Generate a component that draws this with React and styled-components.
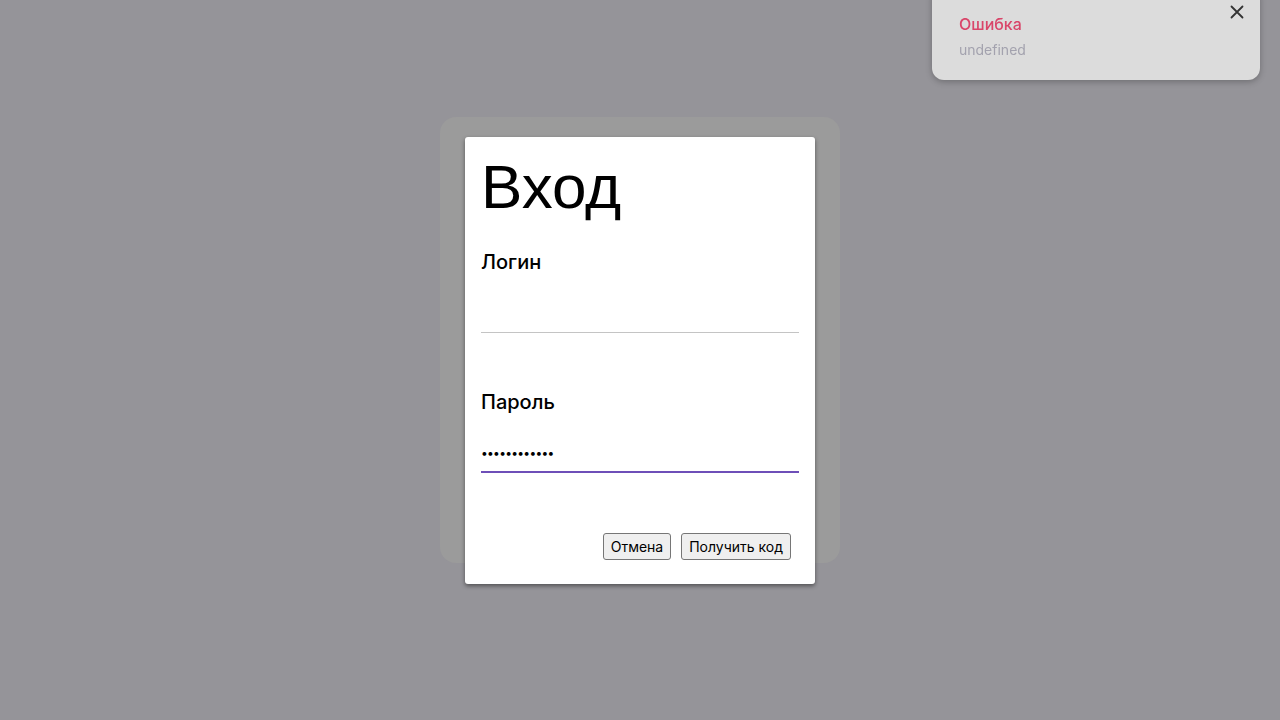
import React from "react";
import styled, { createGlobalStyle } from "styled-components";

const Global = createGlobalStyle`
  html, body { margin: 0; padding: 0; }
  body {
    background: #959499;
    font-family: Inter, "Noto Sans", sans-serif;
    overflow: hidden;
  }
`;

const Page = styled.div`
  width: 1280px;
  height: 720px;
  display: flex;
  align-items: center;
  justify-content: center;
`;

const Backdrop = styled.div`
  box-sizing: border-box;
  width: 400px;
  height: 446px;
  margin-bottom: 40px;
  padding: 20px 25px 0;
  background: #9b9b9b;
  border-radius: 16px;
`;

const Card = styled.form`
  box-sizing: border-box;
  width: 350px;
  height: 447px;
  padding: 16px;
  background: #fff;
  border-radius: 3px;
  box-shadow: 0 2px 4px rgba(0, 0, 0, 0.45);
  display: flex;
  flex-direction: column;
`;

const Title = styled.h1`
  margin: 0;
  font-family: "Liberation Sans", Arial, sans-serif;
  font-weight: 400;
  font-size: 62px;
  line-height: 67px;
  color: #000;
`;

const Field = styled.label`
  display: flex;
  flex-direction: column;
  margin-top: ${(p) => p.$gap}px;
`;

const Label = styled.span`
  font-size: 20px;
  line-height: 24px;
  font-weight: 500;
  color: #000;
`;

const Input = styled.input`
  box-sizing: border-box;
  height: 40px;
  margin-top: 19px;
  padding: 0;
  border: none;
  border-bottom: ${(p) => (p.$focused ? "2px solid #6e4fb8" : "1px solid #c4c4c4")};
  outline: none;
  background: transparent;
  font-family: Inter, "Noto Sans", sans-serif;
  font-size: ${(p) => (p.type === "password" ? "12px" : "16px")};
  letter-spacing: ${(p) => (p.type === "password" ? "-0.7px" : "0")};
  color: #000;
`;

const Actions = styled.div`
  margin-top: auto;
  display: flex;
  justify-content: flex-end;
  gap: 10px;
  padding: 0 8px 8px 0;
`;

const Button = styled.button`
  box-sizing: border-box;
  height: 27px;
  padding: 0 7px;
  font-family: Inter, "Noto Sans", sans-serif;
  font-size: 14px;
  color: #000;
  background: #efefef;
  border: 1px solid #767676;
  border-radius: 3px;
`;

const Toast = styled.div`
  position: fixed;
  top: -16px;
  right: 20px;
  box-sizing: border-box;
  width: 328px;
  padding: 30px 27px 20px;
  background: #dcdcdc;
  border-radius: 12px;
  box-shadow: 0 2px 6px rgba(0, 0, 0, 0.25);
`;

const ToastTitle = styled.div`
  font-size: 16px;
  line-height: 20px;
  font-weight: 500;
  color: #d9466a;
`;

const ToastText = styled.div`
  margin-top: 6px;
  font-size: 14px;
  line-height: 20px;
  color: #a3a2ae;
`;

const Close = styled.button`
  position: absolute;
  top: 21px;
  right: 16px;
  width: 14px;
  height: 14px;
  padding: 0;
  border: none;
  background: transparent;
  display: flex;
`;

export default function App() {
  return (
    <>
      <Global />
      <Page>
        <Backdrop>
          <Card onSubmit={(e) => e.preventDefault()}>
            <Title>Вход</Title>
            <Field $gap={30}>
              <Label>Логин</Label>
              <Input type="text" defaultValue="" />
            </Field>
            <Field $gap={57}>
              <Label>Пароль</Label>
              <Input type="password" defaultValue="............" $focused />
            </Field>
            <Actions>
              <Button type="button">Отмена</Button>
              <Button type="submit">Получить код</Button>
            </Actions>
          </Card>
        </Backdrop>
      </Page>
      <Toast>
        <ToastTitle>Ошибка</ToastTitle>
        <ToastText>undefined</ToastText>
        <Close type="button" aria-label="close">
          <svg width="14" height="14" viewBox="0 0 14 14">
            <path d="M1.5 1.5 L12.5 12.5 M12.5 1.5 L1.5 12.5" stroke="#333" strokeWidth="1.8" strokeLinecap="round" />
          </svg>
        </Close>
      </Toast>
    </>
  );
}
